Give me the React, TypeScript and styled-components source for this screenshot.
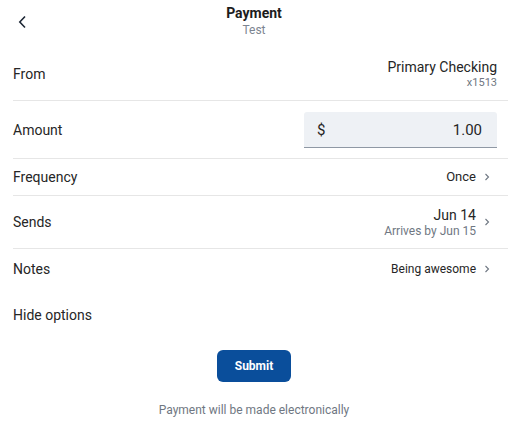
import React from "react";
import styled, { createGlobalStyle } from "styled-components";

const Global = createGlobalStyle`
  html, body { margin: 0; padding: 0; background: #fff; }
  body { font-family: Roboto, "Liberation Sans", Arial, sans-serif; color: #222; }
  * { box-sizing: border-box; }
`;

const Page = styled.div`
  width: 508px;
  height: 435px;
  background: #fff;
  display: flex;
  flex-direction: column;
`;

const Header = styled.div`
  height: 47px;
  display: grid;
  grid-template-columns: 40px 1fr 40px;
  align-items: start;
`;

const BackButton = styled.button`
  border: none;
  background: none;
  padding: 0;
  width: 40px;
  height: 40px;
  display: flex;
  align-items: center;
  justify-content: center;
  margin-left: 3px;
  margin-top: 2px;
  color: #1d2735;
`;

const TitleBlock = styled.div`
  display: flex;
  flex-direction: column;
  align-items: center;
  padding-top: 4px;
`;

const Title = styled.div`
  font-size: 14px;
  font-weight: 700;
  color: #1c1c1c;
  line-height: 18px;
`;

const Subtitle = styled.div`
  font-size: 12px;
  color: #7d8591;
  line-height: 16px;
`;

const List = styled.div`
  padding-left: 13px;
  display: flex;
  flex-direction: column;
`;

const Row = styled.div<{ $h: number; $divider?: boolean }>`
  height: ${(p) => p.$h}px;
  display: flex;
  align-items: center;
  justify-content: space-between;
  padding-right: 11px;
  border-bottom: ${(p) => (p.$divider ? "1px solid #e6e6e6" : "none")};
`;

const Label = styled.div`
  font-size: 14px;
  color: #262626;
`;

const ValueWrap = styled.div`
  display: flex;
  align-items: center;
  gap: 8px;
`;

const ValueStack = styled.div`
  display: flex;
  flex-direction: column;
  align-items: flex-end;
`;

const Primary = styled.div<{ $size?: number }>`
  font-size: ${(p) => p.$size ?? 14}px;
  color: #262626;
  line-height: ${(p) => (p.$size ?? 14) + 3}px;
`;

const Secondary = styled.div`
  font-size: 12px;
  color: #6f7782;
  line-height: 14px;
`;

const Tiny = styled.div`
  font-size: 11px;
  color: #6f7782;
  line-height: 13px;
`;

const Chevron = styled.svg`
  width: 6px;
  height: 8px;
  color: #6f7782;
  flex: none;
  margin-right: 7px;
`;

const AmountBox = styled.div`
  width: 193px;
  height: 36px;
  background: #eef1f5;
  border-radius: 3px 3px 0 0;
  border-bottom: 1.5px solid #8f98a4;
  display: flex;
  align-items: center;
  justify-content: space-between;
  padding: 0 15px 0 13px;
  font-size: 15px;
  color: #262626;
  margin-top: 1px;
`;

const Footer = styled.div`
  display: flex;
  flex-direction: column;
  align-items: center;
  padding-top: 9px;
  gap: 21px;
`;

const SubmitButton = styled.button`
  width: 74px;
  height: 32px;
  border: none;
  border-radius: 6px;
  background: #0a4e9b;
  color: #fff;
  font-family: Roboto, "Liberation Sans", Arial, sans-serif;
  font-weight: 700;
  font-size: 12px;
`;

const Note = styled.div`
  font-size: 12px;
  color: #6f7782;
`;

const SmallChevron = () => (
  <Chevron viewBox="0 0 6 8">
    <path d="M1.5 1 L4.5 4 L1.5 7" fill="none" stroke="currentColor" strokeWidth="1.1" />
  </Chevron>
);

export default function App() {
  return (
    <Page>
      <Global />
      <Header>
        <BackButton aria-label="Back">
          <svg width="12" height="14" viewBox="0 0 12 14">
            <path d="M8 1.5 L2.8 7 L8 12.5" fill="none" stroke="currentColor" strokeWidth="1.6" />
          </svg>
        </BackButton>
        <TitleBlock>
          <Title>Payment</Title>
          <Subtitle>Test</Subtitle>
        </TitleBlock>
        <div />
      </Header>
      <List>
        <Row $h={54} $divider>
          <Label>From</Label>
          <ValueStack>
            <Primary>Primary Checking</Primary>
            <Tiny>x1513</Tiny>
          </ValueStack>
        </Row>
        <Row $h={58} $divider>
          <Label>Amount</Label>
          <AmountBox>
            <span>$</span>
            <span>1.00</span>
          </AmountBox>
        </Row>
        <Row $h={37} $divider>
          <Label>Frequency</Label>
          <ValueWrap>
            <Primary $size={13}>Once</Primary>
            <SmallChevron />
          </ValueWrap>
        </Row>
        <Row $h={53} $divider>
          <Label>Sends</Label>
          <ValueWrap>
            <ValueStack>
              <Primary>Jun 14</Primary>
              <Secondary>Arrives by Jun 15</Secondary>
            </ValueStack>
            <SmallChevron />
          </ValueWrap>
        </Row>
        <Row $h={40}>
          <Label>Notes</Label>
          <ValueWrap>
            <Primary $size={12}>Being awesome</Primary>
            <SmallChevron />
          </ValueWrap>
        </Row>
        <Row $h={52}>
          <Label>Hide options</Label>
        </Row>
      </List>
      <Footer>
        <SubmitButton>Submit</SubmitButton>
        <Note>Payment will be made electronically</Note>
      </Footer>
    </Page>
  );
}
